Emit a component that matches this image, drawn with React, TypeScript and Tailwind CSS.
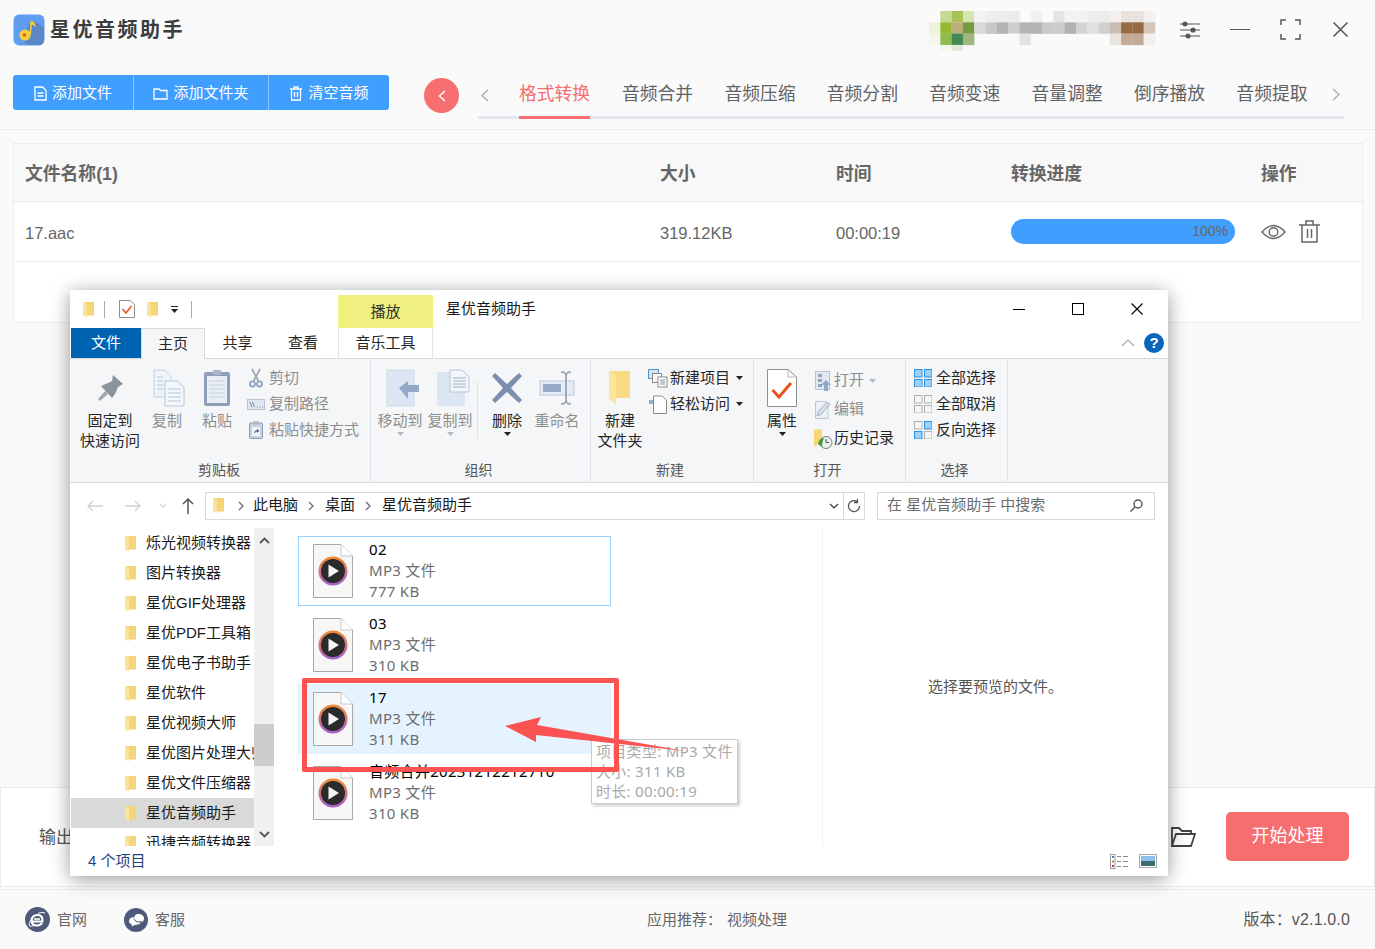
import React from "react";

const FONT = "font-['Liberation_Sans','Noto_Sans_CJK_SC',sans-serif]";
const WIN_TEXT = "font-['Noto_Sans','Noto_Sans_CJK_SC',sans-serif] tracking-[0.3px]";

/* ---------- app icons ---------- */

function Logo() {
  return (
    <svg width="32" height="32" viewBox="0 0 32 32" className="shrink-0">
      <rect x="0.5" y="0.5" width="31" height="31" rx="6" fill="#5f9df2" />
      <path d="M18 6 L31 13 V26 Q31 31 26 31 H14 L9 24 Z" fill="#5a88c9" />
      <circle cx="12" cy="21" r="5.6" fill="#f6cf3a" />
      <circle cx="11.5" cy="21" r="1.8" fill="#e8503a" />
      <path d="M16.4 21 L17.5 7 L19 7 L18 21 Z" fill="#f6cf3a" />
      <path d="M18 6.5 Q23 8 22.5 13.5 Q21 10.5 17.8 10.5 Z" fill="#f6cf3a" />
    </svg>
  );
}

function Pixelated() {
  // blurred account name and avatar
  const cells: [number, number, string][] = [
    [1, 0, "#c4d992"], [2, 0, "#a9c155"], [3, 0, "#d5e5b0"], [4, 0, "#f3f3f3"], [5, 0, "#eeeeee"], [6, 0, "#eeeeee"], [7, 0, "#ebebeb"],
    [9, 0, "#f0f0f0"], [11, 0, "#e4e4e4"], [12, 0, "#f3f3f3"], [13, 0, "#f3f3f3"], [14, 0, "#ededed"], [15, 0, "#ececec"], [16, 0, "#f3f0ee"], [17, 0, "#e9e2dc"], [18, 0, "#e9e2dc"], [19, 0, "#f3f0ee"],
    [0, 1, "#eef3dc"], [1, 1, "#95bb32"], [2, 1, "#bcae7a"], [3, 1, "#759a40"], [4, 1, "#d9d9d9"], [5, 1, "#c8c8c8"], [6, 1, "#b5b5b5"], [7, 1, "#cfcfcf"], [8, 1, "#b4b4b4"], [9, 1, "#b4b4b4"], [10, 1, "#cacaca"], [11, 1, "#cccccc"], [12, 1, "#b2b2b2"], [13, 1, "#d4d4d4"], [14, 1, "#e0e0e0"], [15, 1, "#d0d0d0"], [16, 1, "#c9bcb3"], [17, 1, "#976a44"], [18, 1, "#976a44"], [19, 1, "#d4c6bb"],
    [0, 2, "#f5f7ec"], [1, 2, "#8dbb4e"], [2, 2, "#428a54"], [3, 2, "#9db77f"], [7, 2, "#fafafa"], [8, 2, "#e3e3e3"], [16, 2, "#eae4df"], [17, 2, "#c4ab97"], [18, 2, "#c4ab97"], [19, 2, "#f2f0ee"],
    [1, 3, "#f4f8ec"], [2, 3, "#e0ead0"],
  ];
  return (
    <svg width="245" height="45" viewBox="0 0 245 45" className="mt-[8px] shrink-0">
      {cells.map(([c, r, f]) => (
        <rect key={`${c}-${r}`} x={c * 11.3} y={r * 11.3} width="11.5" height={r === 3 ? 6 : 11.5} fill={f} />
      ))}
    </svg>
  );
}

function Stroke({ w, h, children, sw = 1.4, color = "currentColor", className = "" }: { w: number; h: number; children: React.ReactNode; sw?: number; color?: string; className?: string }) {
  return (
    <svg width={w} height={h} viewBox={`0 0 ${w} ${h}`} fill="none" stroke={color} strokeWidth={sw} className={`shrink-0 ${className}`}>
      {children}
    </svg>
  );
}

function ToolButton({ icon, label, last }: { icon: React.ReactNode; label: string; last?: boolean }) {
  return (
    <div className={`flex h-full items-center justify-center gap-[5px] pt-[1px] text-[15px] text-white ${last ? "flex-1" : "border-r border-[#8cc5ff]"}`}>
      {icon}
      <span>{label}</span>
    </div>
  );
}

/* ---------- explorer icons ---------- */

function NavFolder() {
  return (
    <svg width="13" height="17" viewBox="0 0 13 17" className="shrink-0">
      <path d="M1 1 H12 V14.5 H4 Z" fill="#f6d577" />
      <path d="M1 1 L5 2.5 V16.5 L1 14.5 Z" fill="#fbe49c" />
    </svg>
  );
}

function BigFolder({ w = 24, h = 36 }: { w?: number; h?: number }) {
  return (
    <svg width={w} height={h} viewBox="0 0 24 36" className="shrink-0">
      <path d="M1 1 H22 V28 H8 Z" fill="#f8da80" />
      <path d="M1 1 L8 5 V35 L1 28 Z" fill="#fbe49c" />
    </svg>
  );
}

function MusicFile() {
  return (
    <svg width="40" height="54" viewBox="0 0 40 54" className="shrink-0">
      <defs>
        <linearGradient id="ring" x1="0" y1="0" x2="0" y2="1">
          <stop offset="0" stopColor="#f58a2c" />
          <stop offset="1" stopColor="#a45fd0" />
        </linearGradient>
      </defs>
      <path d="M0.5 0.5 H28 L39.5 12 V53.5 H0.5 Z" fill="#f7f7f7" stroke="#a8a8a8" />
      <path d="M28 0.5 V12 H39.5" fill="#fff" stroke="#c8c8c8" />
      <circle cx="20" cy="27" r="14.5" fill="url(#ring)" />
      <circle cx="20" cy="27" r="12" fill="#2b2b2b" />
      <path d="M15.5 20.5 L26 27 L15.5 33.5 Z" fill="#f4f4f4" />
    </svg>
  );
}

function PinIcon() {
  return (
    <svg width="30" height="30" viewBox="0 0 30 30">
      <path d="M18 2 L28 11 L23 14 L20 21 L17 25 L6 13 L11 11 L17 8 Z" fill="#8b949c" />
      <path d="M10 18 L3 26 L5 28 L13 21 Z" fill="#a3a9af" />
    </svg>
  );
}

function CopyIcon() {
  return (
    <svg width="32" height="38" viewBox="0 0 32 38" className="ml-[3px]">
      <path d="M1 1 H12 L18 7 V28 H1 Z" fill="#eef3f9" stroke="#c3cfdc" />
      <path d="M12 12 H24 L31 18 V37 H12 Z" fill="#f3f6fa" stroke="#b9c7d6" />
      <path d="M15 20 H28 M15 24 H28 M15 28 H28 M15 32 H28 M4 8 H10 M4 12 H10 M4 16 H10 M4 20 H10" stroke="#b3c8df" />
    </svg>
  );
}

function PasteIcon() {
  return (
    <svg width="28" height="38" viewBox="0 0 28 38">
      <rect x="1" y="3" width="26" height="34" rx="2" fill="#8f9fba" />
      <rect x="4" y="7" width="20" height="27" fill="#e9eef6" />
      <path d="M6 12 H22 M6 16 H22 M6 20 H22 M6 24 H22 M6 28 H22" stroke="#c5d0df" />
      <rect x="10" y="1" width="8" height="5" rx="1" fill="#aab6ca" />
    </svg>
  );
}

function CutIcon() {
  return (
    <svg width="14" height="20" viewBox="0 0 14 20" fill="none" stroke="#9aa3af" strokeWidth="1.6">
      <path d="M3 1 L9.5 13 M11 1 L4.5 13" />
      <circle cx="3.5" cy="16" r="2.6" stroke="#8ba0bb" />
      <circle cx="10.5" cy="16" r="2.6" stroke="#8ba0bb" />
    </svg>
  );
}

function PathIcon() {
  return (
    <svg width="18" height="11" viewBox="0 0 18 11" fill="none">
      <rect x="0.5" y="0.5" width="17" height="10" fill="#dfe6ef" stroke="#b8c4d2" />
      <path d="M3 3 L5 8 M5.5 3 L7.5 8 M10 8 H11 M12.5 8 H13.5 M15 8 H16" stroke="#7d8796" />
    </svg>
  );
}

function ShortcutIcon() {
  return (
    <svg width="14" height="18" viewBox="0 0 14 18">
      <rect x="0.5" y="2" width="13" height="15.5" rx="1" fill="#c6d2e2" stroke="#8d9db4" />
      <rect x="4" y="0.5" width="6" height="3" fill="#a8b5c8" />
      <rect x="3" y="6" width="8" height="9" fill="#f2f5f9" />
      <path d="M5 13 Q5 9.5 8 9 V7.5 L10.5 10 L8 12 V10.5 Q6 11 5 13 Z" fill="#5a6f8c" />
    </svg>
  );
}

function MoveIcon({ copy }: { copy?: boolean }) {
  return (
    <svg width="34" height="38" viewBox="0 0 34 38" className="ml-[6px]">
      {copy ? (
        <>
          <rect x="1" y="3" width="28" height="34" fill="#dce6f3" />
          <path d="M14 1 H26 L33 8 V23 H14 Z" fill="#f2f5f9" stroke="#b7c5d6" />
          <path d="M17 9 H30 M17 12 H30 M17 15 H30 M17 18 H30" stroke="#9fb0c4" />
        </>
      ) : (
        <>
          <rect x="1" y="1" width="27" height="36" fill="#dce6f3" stroke="#ced9e8" />
          <path d="M13 19 L22 12 V16 H33 V23 H22 V30 Z" fill="#93a9c8" />
        </>
      )}
    </svg>
  );
}

function DeleteIcon() {
  return (
    <svg width="32" height="32" viewBox="0 0 32 32">
      <path d="M4 1 L16 12 L28 1 L31 4 L20 16 L31 28 L28 31 L16 20 L4 31 L1 28 L12 16 L1 4 Z" fill="#7d8fb0" />
    </svg>
  );
}

function RenameIcon() {
  return (
    <svg width="36" height="34" viewBox="0 0 36 34" fill="none">
      <rect x="1" y="10" width="34" height="14" fill="#e4ebf4" stroke="#b9c7d9" />
      <rect x="4" y="13" width="18" height="8" fill="#98abc8" />
      <path d="M22 1 Q27 1 27 5 V29 Q27 33 32 33 M32 1 Q27 1 27 5 M27 29 Q27 33 22 33" stroke="#8d9db3" strokeWidth="1.6" />
    </svg>
  );
}

function NewItemIcon() {
  return (
    <svg width="20" height="19" viewBox="0 0 20 19" fill="none">
      <rect x="0.5" y="0.5" width="10" height="9" fill="#d2e3f4" stroke="#5b91c7" />
      <rect x="4.5" y="4.5" width="9" height="9" fill="#f7f7f7" stroke="#8a8a8a" />
      <rect x="10" y="8" width="9" height="10" fill="#fff" stroke="#8a8a8a" />
      <path d="M12 11 H17 M12 13 H17 M12 15 H17" stroke="#7a8ea6" />
    </svg>
  );
}

function EasyIcon() {
  return (
    <svg width="20" height="19" viewBox="0 0 20 19" fill="none">
      <path d="M5.5 1 H14 L18.5 5 V18.5 H5.5 Z" fill="#fff" stroke="#8a8a8a" />
      <path d="M1 6 H5 M1 8 H5" stroke="#2f6da8" strokeWidth="1.2" />
    </svg>
  );
}

function PropertiesIcon() {
  return (
    <svg width="30" height="38" viewBox="0 0 30 38" fill="none">
      <path d="M0.5 0.5 H21 L29.5 8 V37.5 H0.5 Z" fill="#fff" stroke="#8f8f8f" />
      <path d="M21 0.5 V8 H29.5" stroke="#b5b5b5" />
      <path d="M5.5 21 L12 28 L24 14" stroke="#e8541e" strokeWidth="3" />
    </svg>
  );
}

function OpenIcon() {
  return (
    <svg width="16" height="20" viewBox="0 0 16 20" fill="none">
      <rect x="0.5" y="0.5" width="14" height="18" fill="#e2e8f0" stroke="#b9c4d2" />
      <rect x="3" y="3" width="4" height="3" fill="#93a5bb" />
      <rect x="3" y="8" width="4" height="3" fill="#93a5bb" />
      <rect x="3" y="13" width="4" height="3" fill="#93a5bb" />
      <path d="M11 9 L16 14 H13 V20 H9 V14 H6 Z" fill="#8da8c8" />
    </svg>
  );
}

function EditIcon() {
  return (
    <svg width="16" height="18" viewBox="0 0 16 18" fill="none">
      <path d="M0.5 0.5 H10 L13 3 V17.5 H0.5 Z" fill="#edf1f6" stroke="#bcc7d4" />
      <path d="M2 15 L3 11 L12 1 L15 3 L6 13.5 Z" fill="#d5dfeb" stroke="#a5b4c6" />
    </svg>
  );
}

function HistoryIcon() {
  return (
    <svg width="20" height="20" viewBox="0 0 20 20">
      <path d="M1 0.5 H9 V15 H5 L1 18 Z" fill="#f6d675" />
      <circle cx="13" cy="13.5" r="6" fill="#eeeeee" stroke="#7d7d7d" />
      <path d="M13 10 V13.5 H16" stroke="#555" fill="none" />
      <path d="M5 15 Q6 9.5 11 9 L9.5 13 L9 18 Z" fill="#3f9b3f" />
    </svg>
  );
}

function SelectGrid({ on }: { on: boolean[] }) {
  return (
    <svg width="18" height="18" viewBox="0 0 18 18">
      {[[0, 0], [10, 0], [0, 10], [10, 10]].map(([x, y], i) => (
        <rect
          key={i}
          x={x + 0.5}
          y={y + 0.5}
          width="7.5"
          height="7.5"
          fill={on[i] ? "#9fd0f5" : "#f4f6f9"}
          stroke={on[i] ? "#2f8fe0" : "#b0b0b0"}
        />
      ))}
    </svg>
  );
}

function DropCaret({ light }: { light?: boolean }) {
  return (
    <svg width="7" height="4" viewBox="0 0 7 4" className="shrink-0">
      <path d="M0 0 H7 L3.5 4 Z" fill={light ? "#b4bac2" : "#222"} />
    </svg>
  );
}

/* ---------- ribbon parts ---------- */

function BigButton({ icon, lines, width, disabled, caret }: { icon: React.ReactNode; lines: string[]; width: number; disabled?: boolean; caret?: "dark" | "light" }) {
  return (
    <div style={{ width }} className="flex shrink-0 flex-col items-center">
      <div className="flex h-[47px] items-center justify-center">{icon}</div>
      <div className={`text-center text-[15px] leading-[20px] ${disabled ? "text-[#8d8d8d]" : "text-[#262626]"}`}>
        {lines.map((l) => <div key={l} className="whitespace-nowrap">{l}</div>)}
      </div>
      {caret && <div className="mt-[1px]"><DropCaret light={caret === "light"} /></div>}
    </div>
  );
}

function SmallButton({ icon, label, disabled, caret, iconW = 20, h = 26, gap = 3, lightCaret }: { icon: React.ReactNode; label: string; disabled?: boolean; caret?: boolean; iconW?: number; h?: number; gap?: number; lightCaret?: boolean }) {
  return (
    <div style={{ height: h, gap }} className={`flex items-center whitespace-nowrap text-[15px] ${disabled ? "text-[#8d8d8d]" : "text-[#262626]"}`}>
      <span style={{ width: iconW }} className="flex shrink-0 items-center justify-center">{icon}</span>
      <span>{label}</span>
      {caret && <span className="ml-[4px]"><DropCaret light={lightCaret} /></span>}
    </div>
  );
}

function RibbonGroup({ label, width, children }: { label: string; width: number; children: React.ReactNode }) {
  return (
    <div style={{ width }} className="flex h-full shrink-0 flex-col border-r border-[#dcdfe3]">
      <div className="flex h-[97px] pt-[4px]">{children}</div>
      <div className="mt-auto pb-[1px] pr-[4px] text-center text-[14px] leading-[20px] text-[#555]">{label}</div>
    </div>
  );
}

function Ribbon() {
  return (
    <div className="flex h-[124px] shrink-0 border-b border-[#d9d9d9] bg-[#f5f6f7] px-[2px] py-[1px]">
      <RibbonGroup label="剪贴板" width={299}>
        <div className="ml-[6px]"><BigButton width={64} icon={<PinIcon />} lines={["固定到", "快速访问"]} /></div>
        <BigButton width={50} disabled icon={<CopyIcon />} lines={["复制"]} />
        <BigButton width={50} disabled icon={<PasteIcon />} lines={["粘贴"]} />
        <div className="ml-[4px] flex flex-col pt-[1px]">
          <SmallButton disabled icon={<CutIcon />} label="剪切" />
          <SmallButton disabled icon={<PathIcon />} label="复制路径" />
          <SmallButton disabled icon={<ShortcutIcon />} label="粘贴快捷方式" />
        </div>
      </RibbonGroup>
      <RibbonGroup label="组织" width={220}>
        <div className="ml-[4px] flex">
          <BigButton width={50} disabled caret="light" icon={<MoveIcon />} lines={["移动到"]} />
          <BigButton width={50} disabled caret="light" icon={<MoveIcon copy />} lines={["复制到"]} />
        </div>
        <div className="my-[18px] ml-[2px] mr-[4px] w-px bg-[#dcdfe3]" />
        <BigButton width={50} caret="dark" icon={<DeleteIcon />} lines={["删除"]} />
        <BigButton width={50} disabled icon={<RenameIcon />} lines={["重命名"]} />
      </RibbonGroup>
      <RibbonGroup label="新建" width={163}>
        <div className="ml-[4px]"><BigButton width={50} icon={<BigFolder />} lines={["新建", "文件夹"]} /></div>
        <div className="ml-[3px] flex flex-col pt-[1px]">
          <SmallButton gap={2} icon={<NewItemIcon />} label="新建项目" caret />
          <SmallButton gap={2} icon={<EasyIcon />} label="轻松访问" caret />
        </div>
      </RibbonGroup>
      <RibbonGroup label="打开" width={152}>
        <div className="ml-[3px]"><BigButton width={50} caret="dark" icon={<PropertiesIcon />} lines={["属性"]} /></div>
        <div className="ml-[6px] flex flex-col pt-[2px]">
          <SmallButton disabled h={29} gap={1} icon={<OpenIcon />} label="打开" caret lightCaret />
          <SmallButton disabled h={29} gap={1} icon={<EditIcon />} label="编辑" />
          <SmallButton h={29} gap={1} icon={<HistoryIcon />} label="历史记录" />
        </div>
      </RibbonGroup>
      <RibbonGroup label="选择" width={102}>
        <div className="ml-[8px] flex flex-col pt-[1px]">
          <SmallButton iconW={18} gap={4} icon={<SelectGrid on={[true, true, true, true]} />} label="全部选择" />
          <SmallButton iconW={18} gap={4} icon={<SelectGrid on={[false, false, false, false]} />} label="全部取消" />
          <SmallButton iconW={18} gap={4} icon={<SelectGrid on={[false, true, true, false]} />} label="反向选择" />
        </div>
      </RibbonGroup>
    </div>
  );
}

/* ---------- explorer window ---------- */

function Chevron() {
  return (
    <Stroke w={6} h={10} color="#666" sw={1.2}><path d="M1 1 L5 5 L1 9" /></Stroke>
  );
}

const navItems = ["烁光视频转换器", "图片转换器", "星优GIF处理器", "星优PDF工具箱", "星优电子书助手", "星优软件", "星优视频大师", "星优图片处理大师", "星优文件压缩器", "星优音频助手", "迅捷音频转换器"];

function FileRow({ name, size, state }: { name: string; size: string; state?: "focus" | "selected" }) {
  const cls = state === "focus" ? "border-[#99d1ff]" : state === "selected" ? "border-transparent bg-[#e5f3ff]" : "border-transparent";
  return (
    <div className={`flex h-[70px] w-[313px] items-center gap-[16px] border pl-[14px] ${cls}`}>
      <MusicFile />
      <div className={`-mt-[2px] text-[15px] leading-[21px] ${WIN_TEXT}`}>
        <div className="whitespace-nowrap text-black">{name}</div>
        <div className="text-[#6d6d6d]">MP3 文件</div>
        <div className="text-[#6d6d6d]">{size}</div>
      </div>
    </div>
  );
}

function Explorer() {
  return (
    <div className="absolute left-[70px] top-[290px] z-10 flex h-[586px] w-[1098px] flex-col bg-white shadow-[0_3px_18px_rgba(0,0,0,0.4)]">
      {/* title bar */}
      <div className="flex h-[38px] shrink-0 items-center">
        <div className="ml-[12px] flex w-[256px] items-center">
          <NavFolder />
          <div className="ml-[9px] h-[17px] w-px bg-[#aaa]" />
          <div className="ml-[14px]">
            <svg width="16" height="18" viewBox="0 0 16 18" fill="none">
              <path d="M0.5 0.5 H11 L15.5 4.5 V17.5 H0.5 Z" fill="#fff" stroke="#8f8f8f" />
              <path d="M3.5 9 L7 13 L12.5 6" stroke="#e8541e" strokeWidth="1.6" />
            </svg>
          </div>
          <div className="ml-[11px]"><NavFolder /></div>
          <div className="ml-[12px] flex flex-col items-center gap-[2px]">
            <div className="h-px w-[7px] bg-[#222]" />
            <DropCaret />
          </div>
          <div className="ml-[13px] h-[17px] w-px bg-[#aaa]" />
        </div>
        <div className="mt-[5px] flex h-[33px] w-[95px] items-center justify-center self-start bg-[#f0f080] pt-[2px] text-[15px] text-[#333]">播放</div>
        <div className="ml-[13px] text-[15px] text-[#1a1a1a]">星优音频助手</div>
        <div className="ml-auto mr-[2px] flex items-center">
          <div className="flex w-[59px] justify-center">
            <div className="h-px w-[12px] bg-black" />
          </div>
          <div className="flex w-[59px] justify-center">
            <div className="h-[12px] w-[12px] border border-black" />
          </div>
          <div className="flex w-[59px] justify-center">
            <Stroke w={12} h={12} color="#000" sw={1.1}><path d="M0.5 0.5 L11.5 11.5 M11.5 0.5 L0.5 11.5" /></Stroke>
          </div>
        </div>
      </div>

      {/* ribbon tabs */}
      <div className="relative flex h-[31px] shrink-0 items-center border-b border-[#d9d9d9] pl-px text-[15px] text-[#262626]">
        <div className="flex h-[30px] w-[70px] items-center justify-center bg-[#0063b1] text-white">文件</div>
        <div className="z-10 -mb-px flex h-[31px] w-[64px] items-center justify-center self-start border-x border-t border-[#d9d9d9] bg-[#f5f6f7]">主页</div>
        <div className="w-[65px] text-center">共享</div>
        <div className="ml-[18px] w-[30px] whitespace-nowrap text-center">查看</div>
        <div className="ml-[20px] flex h-[30px] w-[95px] items-center justify-center border-x border-[#e1e1e1]">音乐工具</div>
        <div className="ml-auto mr-[4px] flex items-center gap-[9px]">
          <Stroke w={14} h={8} color="#aaa" sw={1.2}><path d="M1 7 L7 1 L13 7" /></Stroke>
          <div className="flex h-[20px] w-[20px] items-center justify-center rounded-full bg-[#0a66bd] text-[15px] font-bold text-white">?</div>
        </div>
      </div>

      <Ribbon />

      {/* address bar */}
      <div className="flex h-[45px] shrink-0 items-center">
        <div className="flex w-[135px] shrink-0 items-center pl-[17px]">
          <Stroke w={16} h={12} color="#d0d0d0" sw={1.3}><path d="M16 6 H1 M6 1 L1 6 L6 11" /></Stroke>
          <div className="ml-[22px]"><Stroke w={16} h={12} color="#d0d0d0" sw={1.3}><path d="M0 6 H15 M10 1 L15 6 L10 11" /></Stroke></div>
          <div className="ml-[18px]"><Stroke w={8} h={5} color="#d0d0d0" sw={1.1}><path d="M1 1 L4 4 L7 1" /></Stroke></div>
          <div className="ml-[15px]"><Stroke w={12} h={16} color="#555" sw={1.5}><path d="M6 16 V1 M1 6 L6 1 L11 6" /></Stroke></div>
        </div>
        <div className="flex h-[28px] w-[660px] shrink-0 items-center border border-[#d9d9d9] text-[15px] text-[#1a1a1a]">
          <div className="ml-[6px]"><NavFolder /></div>
          <div className="ml-[13px]"><Chevron /></div>
          <span className="ml-[9px]">此电脑</span>
          <div className="ml-[10px]"><Chevron /></div>
          <span className="ml-[11px]">桌面</span>
          <div className="ml-[10px]"><Chevron /></div>
          <span className="ml-[11px]">星优音频助手</span>
          <div className="ml-auto flex h-full items-center">
            <Stroke w={10} h={6} color="#333" sw={1.2}><path d="M1 1 L5 5 L9 1" /></Stroke>
            <div className="ml-[4px] h-full w-px bg-[#d9d9d9]" />
            <div className="flex w-[20px] justify-center">
              <Stroke w={14} h={14} color="#555" sw={1.3}><path d="M12.5 7 A5.5 5.5 0 1 1 10 2.5 M10.5 0 V3.5 H7" /></Stroke>
            </div>
          </div>
        </div>
        <div className="ml-[12px] flex h-[28px] w-[278px] shrink-0 items-center border border-[#d9d9d9] pl-[9px] pr-[11px] text-[15px] text-[#6d6d6d]">
          <span>在 星优音频助手 中搜索</span>
          <div className="ml-auto">
            <Stroke w={13} h={13} color="#555" sw={1.4}><circle cx="8" cy="5" r="4" /><path d="M5 8 L0.5 12.5" /></Stroke>
          </div>
        </div>
      </div>

      {/* body */}
      <div className="flex min-h-0 flex-1">
        <div className="h-full w-[184px] shrink-0 overflow-hidden pl-px">
          {navItems.map((item) => (
            <div key={item} className={`flex h-[30px] items-center gap-[9px] overflow-hidden whitespace-nowrap pl-[53px] text-[15px] text-[#1a1a1a] ${item === "星优音频助手" ? "bg-[#d9d9d9]" : ""}`}>
              <NavFolder />
              <span className="pt-[1px]">{item}</span>
            </div>
          ))}
        </div>
        <div className="flex h-full w-[20px] shrink-0 flex-col bg-[#f0f0f0]">
          <div className="flex h-[24px] items-center justify-center">
            <Stroke w={11} h={7} color="#555" sw={1.8}><path d="M1 6 L5.5 1.5 L10 6" /></Stroke>
          </div>
          <div className="mt-[172px] h-[42px] bg-[#cdcdcd]" />
          <div className="mt-auto flex h-[24px] items-center justify-center">
            <Stroke w={11} h={7} color="#555" sw={1.8}><path d="M1 1 L5.5 5.5 L10 1" /></Stroke>
          </div>
        </div>
        <div className="flex h-full w-[549px] shrink-0 flex-col gap-[4px] border-r border-[#f0f0f0] pl-[24px] pt-[8px]">
          <FileRow name="02" size="777 KB" state="focus" />
          <FileRow name="03" size="310 KB" />
          <FileRow name="17" size="311 KB" state="selected" />
          <FileRow name="音频合并20231212212710" size="310 KB" />
        </div>
        <div className="flex flex-1 items-center justify-center text-[15px] text-[#555]">
          选择要预览的文件。
        </div>
      </div>

      {/* status bar */}
      <div className="flex h-[30px] shrink-0 items-center pl-[18px] pr-[11px] text-[15px] text-[#1f3f78]">
        <span>4 个项目</span>
        <div className="ml-auto flex items-center gap-[10px]">
          <svg width="19" height="15" viewBox="0 0 19 15" fill="none">
            <rect x="0.5" y="0.5" width="4.5" height="14" fill="#fff" stroke="#999" />
            <rect x="2" y="2" width="2" height="2" fill="#4080c0" />
            <rect x="2" y="6.5" width="2" height="2" fill="#a09020" />
            <rect x="2" y="11" width="2" height="2" fill="#c04020" />
            <path d="M7 2.5 H11 M13 2.5 H18 M7 7.5 H11 M13 7.5 H18 M7 12.5 H11 M13 12.5 H18" stroke="#888" />
          </svg>
          <svg width="18" height="14" viewBox="0 0 18 14">
            <rect x="0.5" y="0.5" width="17" height="13" fill="#fff" stroke="#aaa" />
            <rect x="2" y="2" width="14" height="5" fill="#8fc0ec" />
            <rect x="2" y="7" width="14" height="5" fill="#3d6b70" />
          </svg>
        </div>
      </div>

      {/* tooltip over the file list */}
      <div className={`absolute left-[521px] top-[449px] h-[65px] w-[147px] border border-[#ccc] bg-white/95 pl-[4px] pt-[1px] text-[15px] leading-[20px] text-[#a9a9a9] shadow-[2px_2px_3px_rgba(0,0,0,0.2)] ${WIN_TEXT}`}>
        <div className="whitespace-nowrap">项目类型: MP3 文件</div>
        <div>大小: 311 KB</div>
        <div>时长: 00:00:19</div>
      </div>

      {/* red annotation */}
      <div className="absolute left-[232px] top-[388px] h-[94px] w-[317px] rounded-[2px] border-[5px] border-[#fb5252]" />
      <svg className="absolute left-[430px] top-[420px]" width="190" height="50" viewBox="0 0 190 50">
        <path d="M5 16 L41 7 L37 15 L185 41 L36 25 L36 32 Z" fill="#fb5252" />
      </svg>
    </div>
  );
}

/* ---------- app shell ---------- */

const tabs = ["音频合并", "音频压缩", "音频分割", "音频变速", "音量调整", "倒序播放", "音频提取"];

export default function App() {
  return (
    <div className={`relative flex h-[949px] w-full flex-col overflow-hidden bg-[#fafafa] ${FONT}`}>
      {/* title bar */}
      <header className="flex h-[58px] shrink-0 items-center pl-[13px] pt-[1px]">
        <Logo />
        <h1 className="ml-[5px] text-[20px] font-bold tracking-[2.5px] text-[#3c3c3c]">星优音频助手</h1>
        <div className="ml-auto flex items-center text-[#555]">
          <Pixelated />
          <div className="ml-[6px]">
            <Stroke w={20} h={20} color="#555" sw={1.2}>
              <path d="M0 4 H20 M0 10 H20 M0 16 H20" />
              <circle cx="5" cy="4" r="2" fill="#555" />
              <circle cx="13" cy="10" r="2" fill="#555" />
              <circle cx="8" cy="16" r="2" fill="#555" />
            </Stroke>
          </div>
          <div className="ml-[30px]"><div className="h-[1.5px] w-[20px] bg-[#555]" /></div>
          <div className="ml-[30px]">
            <Stroke w={21} h={21} color="#555" sw={1.5}><path d="M1 6 V1 H6 M15 1 H20 V6 M20 15 V20 H15 M6 20 H1 V15" /></Stroke>
          </div>
          <div className="ml-[32px] mr-[27px]">
            <Stroke w={15} h={15} color="#555" sw={1.5}><path d="M0.5 0.5 L14.5 14.5 M14.5 0.5 L0.5 14.5" /></Stroke>
          </div>
        </div>
      </header>

      {/* toolbar */}
      <div className="flex h-[72px] shrink-0 items-start border-b border-[#ececec] pl-[13px] pt-[17px]">
        <div className="grid h-[35px] w-[376px] grid-cols-[121px_135px_1fr] items-center rounded-[3px] bg-[#409eff]">
          <ToolButton label="添加文件" icon={
            <Stroke w={13} h={15} color="#fff" sw={1.3}><path d="M1 1 H8.5 L12 4.5 V14 H1 Z M3.5 7 H9.5 M3.5 10 H9.5" /></Stroke>
          } />
          <ToolButton label="添加文件夹" icon={
            <Stroke w={15} h={13} color="#fff" sw={1.3}><path d="M1 2 H6 L7.5 3.5 H14 V12 H1 Z" /></Stroke>
          } />
          <ToolButton last label="清空音频" icon={
            <Stroke w={14} h={15} color="#fff" sw={1.3}><path d="M1 3 H13 M5 3 V1 H9 V3 M2.5 3 V14 H11.5 V3 M5.5 6 V11 M8.5 6 V11" /></Stroke>
          } />
        </div>
        <div className="ml-[35px] mt-[3px] flex h-[35px] w-[35px] items-center justify-center self-start rounded-full bg-[#f76e6e]">
          <Stroke w={8} h={12} color="#fff" sw={1.5}><path d="M7 1 L1.5 6 L7 11" /></Stroke>
        </div>
        <nav className="ml-[19px] mt-[3px] flex h-[41px] w-[866px] items-center self-start border-b-[3px] border-[#e4e7ed] text-[17.8px] text-[#606266]">
          <div className="flex w-[41px] -translate-y-[2px] justify-start pl-[3px]">
            <Stroke w={8} h={13} color="#aaa" sw={1.3}><path d="M7 1 L1 6.5 L7 12" /></Stroke>
          </div>
          <div className="relative flex h-full w-[71px] items-center text-[#f76e6e]">
            <span className="-translate-y-[3px] whitespace-nowrap">格式转换</span>
            <div className="absolute -bottom-[3px] left-0 h-[3px] w-full bg-[#f76e6e]" />
          </div>
          <div className="ml-[32px] flex -translate-y-[3px] gap-[31.4px]">
            {tabs.map((t) => <span key={t} className="w-[71px] whitespace-nowrap">{t}</span>)}
          </div>
        </nav>
        <div className="absolute left-[1332px] top-[88px]">
          <Stroke w={8} h={13} color="#aaa" sw={1.3}><path d="M1 1 L7 6.5 L1 12" /></Stroke>
        </div>
      </div>

      {/* file table */}
      <section className="mx-[13px] mt-[13px] h-[180px] w-[1350px] shrink-0 border border-[#ececec] bg-white">
        <div className="grid h-[58px] grid-cols-[635px_176px_175px_250px_1fr] items-center border-b border-[#ececec] bg-[#f8f8f8] pl-[11px] pt-[3px] text-[17.8px] font-bold text-[#666]">
          <span>文件名称(1)</span>
          <span>大小</span>
          <span>时间</span>
          <span>转换进度</span>
          <span>操作</span>
        </div>
        <div className="grid h-[60px] grid-cols-[635px_176px_175px_250px_1fr] items-center border-b border-[#ececec] pl-[11px] text-[16.5px] text-[#666]">
          <span className="pt-[3px]">17.aac</span>
          <span className="pt-[3px]">319.12KB</span>
          <span className="pt-[3px]">00:00:19</span>
          <div className="flex h-[25px] w-[224px] items-center justify-end rounded-full bg-[#409eff] pr-[7px] text-[14px] text-[#666]">100%</div>
          <div className="flex items-center gap-[13px]">
            <Stroke w={25} h={16} color="#666" sw={1.4}>
              <path d="M1 8 Q12.5 -5 24 8 Q12.5 21 1 8 Z" />
              <circle cx="12.5" cy="8" r="4.3" />
            </Stroke>
            <Stroke w={21} h={23} color="#666" sw={1.5}>
              <path d="M0 5 H21 M7 5 V1 H14 V5 M3 5 V22 H18 V5 M8.5 9 V18 M12.5 9 V18" />
            </Stroke>
          </div>
        </div>
      </section>

      {/* output bar */}
      <section className="mt-auto flex h-[100px] shrink-0 items-center border border-[#ececec] bg-white pb-[2px] pl-[38px] pr-[25px]">
        <span className="pt-[4px] text-[17px] text-[#555]">输出目录</span>
        <div className="ml-auto pt-[2px]">
          <Stroke w={26} h={22} color="#444" sw={1.8}>
            <path d="M2 20 V2 H9 L12 5 H21 V8 M2 20 H21 L25 8 H6 L2 20 Z" />
          </Stroke>
        </div>
        <button className="ml-[30px] h-[49px] w-[123px] rounded-[5px] bg-[#f76e6e] text-[18px] text-white">开始处理</button>
      </section>

      {/* footer */}
      <footer className="mt-[2px] flex h-[60px] shrink-0 items-center border-t border-[#ececec] pl-[25px] pr-[25px] text-[15px] text-[#666]">
        <div className="flex h-[25px] w-[25px] items-center justify-center rounded-full bg-[#4d5a7a]">
          <svg width="19" height="17" viewBox="0 0 19 17" fill="none">
            <path d="M4 10.5 H14.5 Q15 4 9.5 4 Q4 4 3.5 9.5 Q3.5 14.5 9 14.5 Q12.5 14.5 14 12" stroke="#fff" strokeWidth="2.2" />
            <path d="M6 8 H12" stroke="#fff" strokeWidth="1.6" />
            <path d="M17 2 Q14 0.5 10 2.5 M3 9 Q0 13 1.5 15 Q3 16 6 14.5" stroke="#fff" strokeWidth="1" />
          </svg>
        </div>
        <span className="ml-[7px] pt-[1px]">官网</span>
        <div className="ml-[37px] flex h-[24px] w-[24px] items-center justify-center rounded-full bg-[#4d5a7a]">
          <svg width="17" height="14" viewBox="0 0 17 14">
            <path d="M10 1 C14 1 16 3 16 5.5 C16 7.5 15 8.5 14 9 L13 8 C10 9 7 8 6 5 C6 3 8 1 10 1 Z" fill="#fff" />
            <path d="M5.5 4 C2.5 4.5 1 6 1 8 C1 10 2.5 11 4 11.5 L3.5 13.5 L7 12 C10 12 12 11 13 9.5 C9 10 5.5 8 5.5 4 Z" fill="#fff" />
          </svg>
        </div>
        <span className="ml-[7px] pt-[1px]">客服</span>
        <span className="ml-[462px] pt-[1px]">应用推荐：</span>
        <span className="ml-[5px] pt-[1px]">视频处理</span>
        <span className="ml-auto text-[16px] tracking-[0.15px] text-[#555]">版本：v2.1.0.0</span>
      </footer>

      <Explorer />
    </div>
  );
}
